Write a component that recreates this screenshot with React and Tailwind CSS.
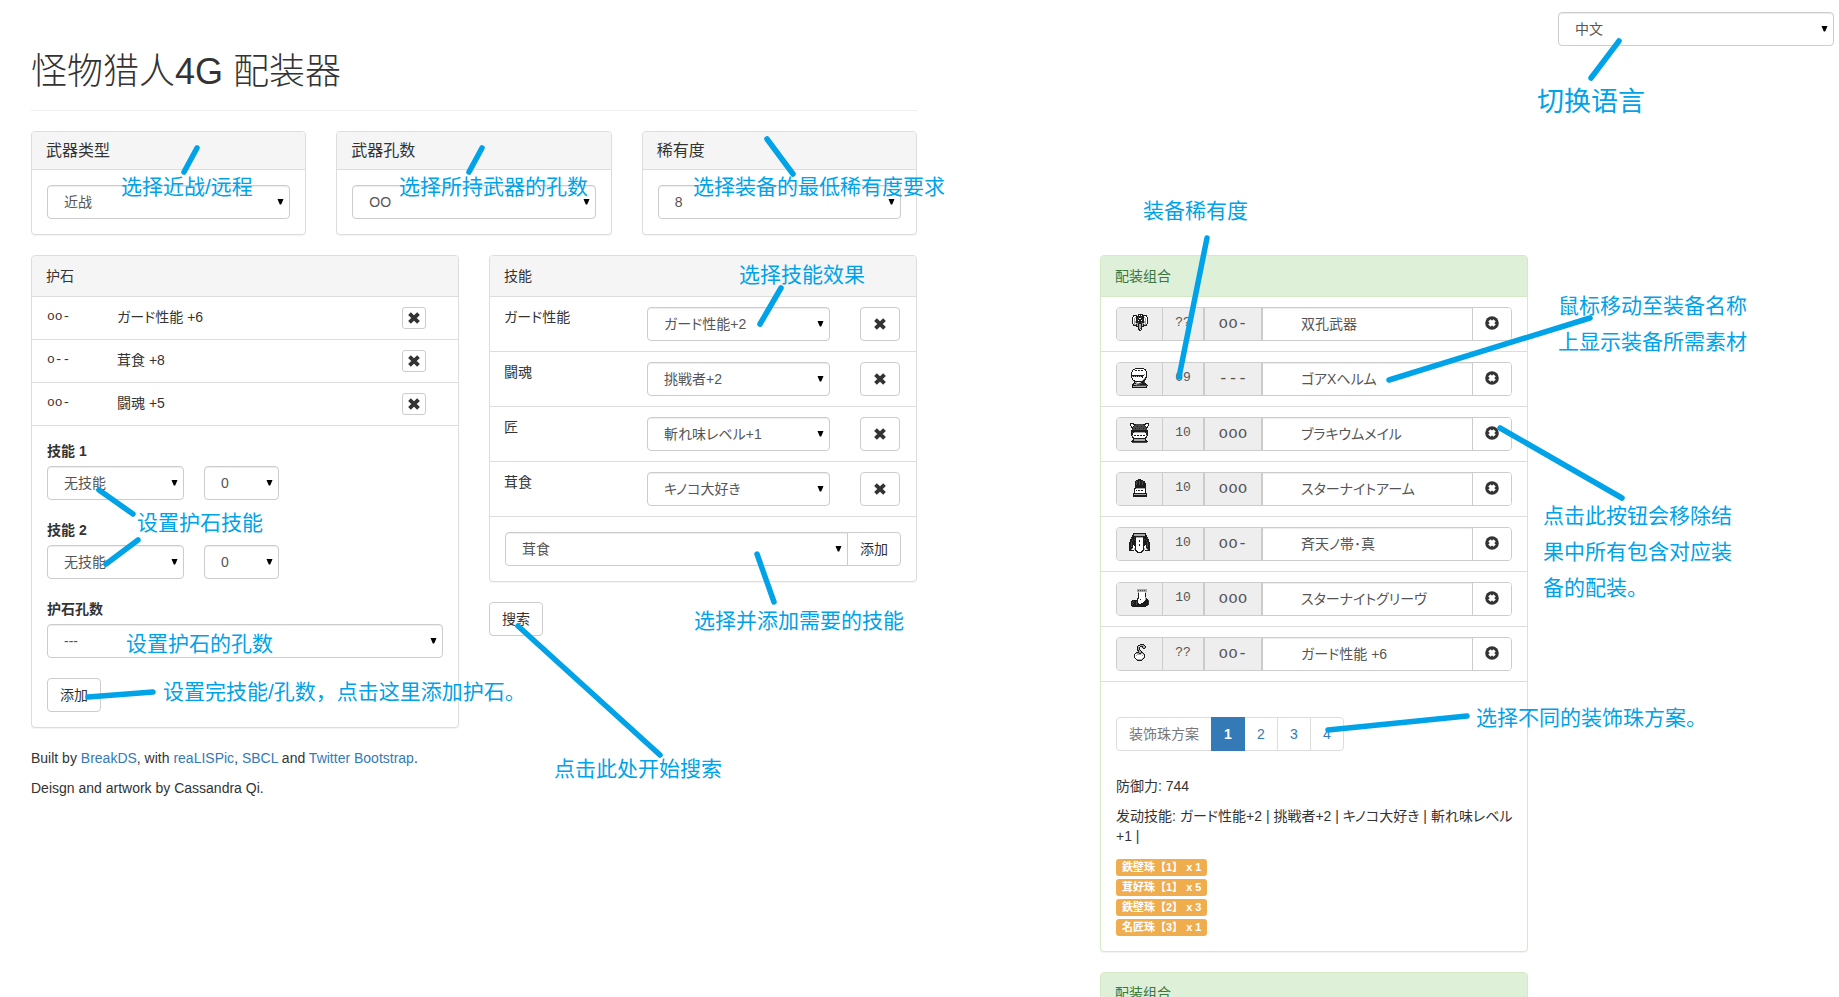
import React from "react";

const SANS = "font-['Liberation_Sans','Noto_Sans_CJK_SC',sans-serif]";
const JP_PLAIN = "font-['Liberation_Sans','Noto_Sans_CJK_JP',sans-serif]";
const JP = "font-['Liberation_Sans','Noto_Sans_CJK_JP',sans-serif] [font-feature-settings:'palt']";
const MONO = "font-['Liberation_Mono',monospace]";
const CONTROL =
  "h-[34px] w-full appearance-none border border-[#ccc] bg-white pl-4 pr-6 text-sm text-[#555] shadow-[inset_0_1px_1px_rgba(0,0,0,0.075)] outline-none";
const BUTTON =
  "flex items-center justify-center border border-[#ccc] bg-white text-sm leading-5 text-[#333]";

/* Pixel sprites: # black, g dark grey, + mid grey, . white */
const SPRITES = {
  weapon: [
    "      #####     ",
    " #### #.#.##### ",
    " #..########..# ",
    "#..+##g##g##+..#",
    "#.+.###..###.+.#",
    "#.+.#g####g#.+.#",
    "#.+.##.##.##.+.#",
    "#.++########++.#",
    "#.++##g##g##++.#",
    "#.+.++####++.+.#",
    " #++#+#++#+#++# ",
    " ####+#++#+#### ",
    "    ###++###    ",
    "      #++#      ",
    "      #+g#      ",
    "      ##.#      ",
    "       ##       ",
  ],
  helm: [
    "    #########    ",
    "  ##.........##  ",
    " #..##.##.##..#  ",
    " #.............# ",
    "#..............# ",
    "#..............# ",
    "#............+.# ",
    "#############..# ",
    "#+#+#+#+#+##...# ",
    "#..........#..## ",
    " #...........+#  ",
    " #..........+##  ",
    "  ##.......+##   ",
    "   ##########g   ",
    "   #++...+###g   ",
    "  ###+++ggg####  ",
    " ##+++ggg####### ",
    " ####ggggggggggg#",
    " #+++++++++++++# ",
    " ############### ",
  ],
  mail: [
    "####           ####",
    "#..###ggggggg###..#",
    "#...#ggggggggg#...#",
    " #.#ggg#ggg#ggg#.# ",
    " ##ggggggggggggg## ",
    "  #gg#ggg#ggg#gg#  ",
    "  ggggggggggggggg  ",
    " ################# ",
    " ################# ",
    " #g#+++++++++++#g# ",
    " ##.............## ",
    " ##.............## ",
    " #+.##.##.##.##.+# ",
    "  #.............#  ",
    "  ##...........##  ",
    "   #############   ",
    "   #+++++++++++#   ",
    "  ##+++++++++++##  ",
    " ################# ",
    "  ggggggggggggggg  ",
  ],
  arm: [
    "     ###      ",
    "   #######    ",
    "  #g##g##g##  ",
    "  #g##g##g##  ",
    "  #g##g##g### ",
    "  #g##g##g### ",
    "  ########### ",
    "  ########### ",
    "  ########### ",
    " ##+++++++++# ",
    " #..........# ",
    " #.#.##.##..# ",
    " #..........# ",
    " #..........# ",
    "##############",
    "#++++++++++++#",
    "##############",
    "##############",
  ],
  waist: [
    "    #############    ",
    "    #+++++++++++#    ",
    "   ##+++++++++++##   ",
    "   ###############   ",
    "  #####+++++++#####  ",
    "  g####.......####g  ",
    " ####g#.......#g#### ",
    " ##g###...#...###g## ",
    " ######...#...###### ",
    "##g####.......####g##",
    "##g####.......####g##",
    "##g####...#...####g##",
    "##g#.##...#...##.#g##",
    "##g#..#.......#..#g##",
    "####..#.......#..####",
    "###+.+#.......#+.+###",
    "##+..+#.......#+..+##",
    "##### ##.....## #####",
    "       ##...##       ",
    "        #####        ",
  ],
  greave: [
    "      ++++++++++  ",
    "      +g+g+g+g++  ",
    "      ++++++++++  ",
    "       +......+   ",
    "       #......#   ",
    "       #......#   ",
    "       #......#   ",
    "       #......#   ",
    "       #......+   ",
    "      ##......+#  ",
    "      #..#....+## ",
    " ######.......###g",
    "##g##g#......#####",
    "#g###g#.....#####g",
    "##g##g##..########",
    "#g###g###########g",
    "################g ",
    " ##############   ",
  ],
  charm: [
    "      ####  ",
    "    ##++++# ",
    "   #+.###++#",
    "   #+#  #++#",
    "   #+#   ## ",
    "   #+#      ",
    "   ##+#     ",
    "    #++#    ",
    "  ###++##   ",
    " #+++##++#  ",
    "#..++++..+# ",
    "#.+.....+.# ",
    "#.........# ",
    "#........+# ",
    " #......+#  ",
    "  #+++++#   ",
    "   #####    ",
  ],
};

const INK = { "#": "#1c1c1c", g: "#4a4a4a", "+": "#a8a8a8", ".": "#ffffff" };

function Sprite({ name }) {
  const rows = SPRITES[name];
  const w = rows[0].length;
  const h = rows.length;
  return (
    <svg width={w} height={h} viewBox={`0 0 ${w} ${h}`} shapeRendering="crispEdges" aria-hidden="true">
      {rows.flatMap((row, y) =>
        [...row].map((c, x) =>
          c === " " ? null : <rect key={`${x}-${y}`} x={x} y={y} width="1" height="1" fill={INK[c]} />
        )
      )}
    </svg>
  );
}

function Cross() {
  return (
    <svg width="12" height="12" viewBox="0 0 12 12" stroke="#333" strokeWidth="3.9" aria-hidden="true">
      <path d="M1.5 1.7 10.5 10.3M10.5 1.7 1.5 10.3" />
    </svg>
  );
}

function CircleCross() {
  return (
    <svg width="14" height="14" viewBox="0 0 14 14" aria-hidden="true">
      <circle cx="7" cy="7" r="6.8" fill="#333" />
      <path d="M4.4 4.4 9.6 9.6M9.6 4.4 4.4 9.6" stroke="#fff" strokeWidth="3.4" />
    </svg>
  );
}

function Select({ label, id, options, lang = "zh", rounded = "rounded" }) {
  return (
    <div className="relative w-full">
      <select id={id} aria-label={label} className={`${CONTROL} ${rounded} ${lang === "ja" ? JP : SANS}`}>
        {options.map((o) => (
          <option key={o}>{o}</option>
        ))}
      </select>
      <svg className="pointer-events-none absolute right-[6px] top-[14px]" width="7" height="6" viewBox="0 0 7 6" aria-hidden="true">
        <path d="M0.5 0H6.5L4.2 5.6H2.8Z" fill="#000" />
      </svg>
    </div>
  );
}

function Panel({ title, large, success, children }) {
  const edge = success ? "border-[#d6e9c6]" : "border-[#ddd]";
  const head = success ? "bg-[#dff0d8] text-[#3c763d]" : "bg-[#f5f5f5] text-[#333]";
  const size = large ? "text-base leading-[17px]" : "text-sm leading-5";
  return (
    <section className={`mb-5 rounded border bg-white shadow-[0_1px_1px_rgba(0,0,0,0.05)] ${edge}`}>
      <h2 className={`rounded-t-[3px] border-b px-[14px] py-[10px] ${edge} ${head} ${size}`}>{title}</h2>
      {children}
    </section>
  );
}

const charms = [
  { slots: "oo-", name: "ガード性能 +6" },
  { slots: "o--", name: "茸食 +8" },
  { slots: "oo-", name: "闘魂 +5" },
];

const skills = [
  { name: "ガード性能", effects: ["ガード性能+2", "ガード性能+1"] },
  { name: "闘魂", effects: ["挑戦者+2", "挑戦者+1"] },
  { name: "匠", effects: ["斬れ味レベル+1"] },
  { name: "茸食", effects: ["キノコ大好き"] },
];

const gear = [
  { icon: "weapon", rare: "??", slots: "oo-", name: "双孔武器" },
  { icon: "helm", rare: "09", slots: "---", name: "ゴアXヘルム" },
  { icon: "mail", rare: "10", slots: "ooo", name: "ブラキウムメイル" },
  { icon: "arm", rare: "10", slots: "ooo", name: "スターナイトアーム" },
  { icon: "waist", rare: "10", slots: "oo-", name: "斉天ノ帯･真" },
  { icon: "greave", rare: "10", slots: "ooo", name: "スターナイトグリーヴ" },
  { icon: "charm", rare: "??", slots: "oo-", name: "ガード性能 +6" },
];

const jewels = ["鉄壁珠【1】 x 1", "茸好珠【1】 x 5", "鉄壁珠【2】 x 3", "名匠珠【3】 x 1"];

function SkillField({ n }) {
  return (
    <div className="mb-5">
      <label htmlFor={`charm-skill-${n}`} className="mb-[5px] block text-sm font-bold leading-5">
        技能 {n}
      </label>
      <div className="flex gap-5">
        <div className="w-[137px]">
          <Select id={`charm-skill-${n}`} options={["无技能"]} />
        </div>
        <div className="w-[75px]">
          <Select label={`技能 ${n} 点数`} options={["0"]} />
        </div>
      </div>
    </div>
  );
}

function CharmPanel() {
  return (
    <Panel title="护石">
      <ul>
        {charms.map((c) => (
          <li key={c.name} className="grid grid-cols-[2fr_8fr_2fr] border-b border-[#ddd] py-[10px] text-sm leading-5">
            <span className={`pl-[15px] text-[13px] leading-5 ${MONO}`}>{c.slots}</span>
            <span className={`pl-[14px] ${JP}`} lang="ja">{c.name}</span>
            <div className="pl-[15px]">
              <button aria-label="删除护石" className={`${BUTTON} h-[22px] w-6 rounded-[3px]`}>
                <Cross />
              </button>
            </div>
          </li>
        ))}
      </ul>
      <form className="p-[15px]" onSubmit={(e) => e.preventDefault()}>
        <SkillField n={1} />
        <SkillField n={2} />
        <div className="mb-5">
          <label htmlFor="charm-slots" className="mb-[5px] block text-sm font-bold leading-5">护石孔数</label>
          <Select id="charm-slots" options={["---", "O--", "OO-", "OOO"]} />
        </div>
        <button className={`${BUTTON} h-[34px] rounded px-3`}>添加</button>
      </form>
    </Panel>
  );
}

function SkillPanel() {
  return (
    <Panel title="技能">
      <ul>
        {skills.map((s) => (
          <li key={s.name} className="grid grid-cols-[4fr_6fr_2fr] border-b border-[#ddd] py-[10px] text-sm leading-5">
            <span className={`px-[14px] ${JP}`} lang="ja">{s.name}</span>
            <div className="px-[15px]">
              <Select label={s.name} options={s.effects} lang="ja" />
            </div>
            <div className="pl-[15px]">
              <button aria-label="删除技能" className={`${BUTTON} h-[34px] w-10 rounded`}>
                <Cross />
              </button>
            </div>
          </li>
        ))}
      </ul>
      <div className="flex p-[15px]">
        <Select label="添加技能" options={["茸食", "匠", "闘魂"]} lang="ja" rounded="rounded-l" />
        <button className={`${BUTTON} -ml-px h-[34px] shrink-0 rounded-r px-3`}>添加</button>
      </div>
    </Panel>
  );
}

function ResultPanel() {
  return (
    <Panel title="配装组合" success>
      <ul>
        {gear.map((g) => (
          <li key={g.icon} className="border-b border-[#ddd] px-[15px] py-[10px]">
            <div className="flex h-[34px] overflow-hidden rounded border border-[#ccc] text-[#555]">
              <span className="flex w-[45px] shrink-0 items-center justify-center bg-[#eee] pb-[3px]">
                <Sprite name={g.icon} />
              </span>
              <span className={`flex w-[41px] shrink-0 items-center justify-center border-l border-[#ccc] bg-[#eee] pb-[2px] text-[13px] ${MONO}`}>{g.rare}</span>
              <span className={`flex w-[58px] shrink-0 items-center justify-center border-l-2 border-[#ccc] bg-[#eee] text-base ${MONO}`}>{g.slots}</span>
              <input
                readOnly
                lang="ja"
                aria-label="装备名称"
                value={g.name}
                className={`min-w-0 flex-1 border-l-2 border-[#ccc] bg-white pl-[38px] text-sm shadow-[inset_0_1px_1px_rgba(0,0,0,0.075)] outline-none ${JP}`}
              />
              <button aria-label="移除装备" className="flex w-[39px] shrink-0 items-center justify-center border-l border-[#ccc] bg-white pb-[2px]">
                <CircleCross />
              </button>
            </div>
          </li>
        ))}
      </ul>
      <div className="p-[15px] text-sm leading-5">
        <nav className="mb-[25px] mt-5 flex h-[34px] w-max items-stretch rounded border border-[#ddd] text-[#337ab7]">
          <span className="flex items-center px-3 text-[#777]">装饰珠方案</span>
          <a href="#plan-1" className="-my-px flex w-[34px] items-center justify-center bg-[#337ab7] font-bold text-white">1</a>
          <a href="#plan-2" className="flex w-8 items-center justify-center">2</a>
          <a href="#plan-3" className="flex w-[33px] items-center justify-center border-l border-[#ddd]">3</a>
          <a href="#plan-4" className="flex w-[33px] items-center justify-center border-l border-[#ddd]">4</a>
        </nav>
        <p className="mb-[10px]">防御力: 744</p>
        <p className="-mr-3 mb-[10px]" lang="ja">
          发动技能: <span className={JP}>ガード性能+2 | 挑戦者+2 | キノコ大好き | 斬れ味レベル<br />+1 |</span>
        </p>
        <ul>
          {jewels.map((j) => (
            <li key={j} className="flex h-5 items-end">
              <span lang="ja" className={`rounded-[3px] bg-[#f0ad4e] px-[6px] text-[11px] font-bold leading-[17px] text-white ${JP_PLAIN}`}>{j}</span>
            </li>
          ))}
        </ul>
      </div>
    </Panel>
  );
}

const strokes = [
  [197, 148, 184, 172], [482, 148, 469, 172], [767, 139, 793, 174], [781, 288, 760, 324],
  [99, 490, 133, 514], [138, 540, 106, 564], [88, 697, 153, 692], [518, 626, 660, 755],
  [757, 554, 774, 602], [1207, 238, 1179, 377], [1389, 380, 1590, 318], [1500, 428, 1622, 498],
  [1328, 730, 1467, 716], [1619, 41, 1591, 78],
];

const NOTE = "absolute whitespace-nowrap text-[21px] leading-9";

function Notes() {
  return (
    <div className={`pointer-events-none absolute inset-0 overflow-hidden text-[#00a2e8] ${SANS}`}>
      <svg className="absolute left-0 top-0" width="1839" height="997" viewBox="0 0 1839 997" stroke="#00a2e8" strokeWidth="5.5" strokeLinecap="round" aria-hidden="true">
        {strokes.map(([x1, y1, x2, y2]) => (
          <line key={`${x1}-${y1}`} x1={x1} y1={y1} x2={x2} y2={y2} />
        ))}
      </svg>
      <p className={`${NOTE} left-[121px] top-[169px]`}>选择近战/远程</p>
      <p className={`${NOTE} left-[399px] top-[169px]`}>选择所持武器的孔数</p>
      <p className={`${NOTE} left-[693px] top-[169px]`}>选择装备的最低稀有度要求</p>
      <p className={`${NOTE} left-[739px] top-[257px]`}>选择技能效果</p>
      <p className={`${NOTE} left-[137px] top-[505px]`}>设置护石技能</p>
      <p className={`${NOTE} left-[126px] top-[626px]`}>设置护石的孔数</p>
      <p className={`${NOTE} left-[163px] top-[674px]`}>设置完技能/孔数，点击这里添加护石。</p>
      <p className={`${NOTE} left-[694px] top-[603px]`}>选择并添加需要的技能</p>
      <p className={`${NOTE} left-[554px] top-[751px]`}>点击此处开始搜索</p>
      <p className={`${NOTE} left-[1143px] top-[193px]`}>装备稀有度</p>
      <p className={`${NOTE} left-[1558px] top-[288px]`}>鼠标移动至装备名称<br />上显示装备所需素材</p>
      <p className={`${NOTE} left-[1543px] top-[498px]`}>点击此按钮会移除结<br />果中所有包含对应装<br />备的配装。</p>
      <p className={`${NOTE} left-[1476px] top-[700px]`}>选择不同的装饰珠方案。</p>
      <p className="absolute left-[1537px] top-[84px] whitespace-nowrap text-[27px] leading-9">切换语言</p>
    </div>
  );
}

export default function App() {
  return (
    <div className={`relative h-screen overflow-hidden bg-white text-sm text-[#333] ${SANS}`} lang="zh-CN">
      <div className="grid grid-cols-[minmax(0,916fr)_minmax(0,153fr)_minmax(0,458fr)_minmax(0,296fr)] pl-4">
        <main className="px-[15px] pt-[52px]">
          <header className="mb-5 border-b border-[#eee] pb-[18px]">
            <h1 className="text-4xl font-light leading-10">怪物猎人4G 配装器</h1>
          </header>
          <div className="grid grid-cols-3 gap-x-[30px]">
            <Panel title="武器类型" large>
              <div className="p-[15px]"><Select label="武器类型" options={["近战", "远程"]} /></div>
            </Panel>
            <Panel title="武器孔数" large>
              <div className="p-[15px]"><Select label="武器孔数" options={["OO", "O", "OOO"]} /></div>
            </Panel>
            <Panel title="稀有度" large>
              <div className="p-[15px]"><Select label="稀有度" options={["8", "9", "10"]} /></div>
            </Panel>
          </div>
          <div className="grid grid-cols-2 items-start gap-x-[30px]">
            <CharmPanel />
            <div>
              <SkillPanel />
              <button className={`${BUTTON} h-[34px] rounded px-3`}>搜索</button>
            </div>
          </div>
          <footer className="flex flex-col gap-[10px] leading-5">
            <p>
              Built by <a href="#breakds" className="text-[#337ab7]">BreakDS</a>, with{" "}
              <a href="#realispic" className="text-[#337ab7]">reaLISPic</a>,{" "}
              <a href="#sbcl" className="text-[#337ab7]">SBCL</a> and{" "}
              <a href="#bootstrap" className="text-[#337ab7]">Twitter Bootstrap</a>.
            </p>
            <p>Deisgn and artwork by Cassandra Qi.</p>
          </footer>
        </main>
        <div />
        <aside className="px-[15px] pt-[255px]">
          <ResultPanel />
          <Panel title="配装组合" success />
        </aside>
        <div className="pl-[15px] pr-[5px] pt-3">
          <Select label="语言" options={["中文", "日本語", "English"]} />
        </div>
      </div>
      <Notes />
    </div>
  );
}
